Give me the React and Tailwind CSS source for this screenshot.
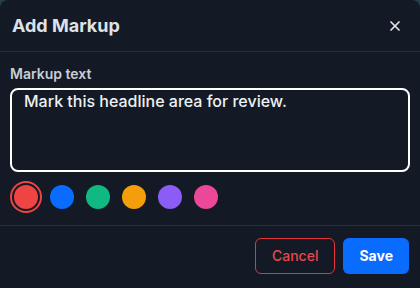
import React, { useState } from 'react';
import { X } from 'lucide-react';

const swatches = ['#ef4444', '#0a6cff', '#10b981', '#f59e0b', '#8b5cf6', '#ec4899'];

const App = () => {
  const [color, setColor] = useState(0);
  const [text, setText] = useState('Mark this headline area for review.');

  return (
    <div className="w-[420px] h-[288px] bg-[#22404a] overflow-hidden" style={{ fontFamily: 'Inter, "Noto Sans", sans-serif' }}>
      <div className="w-full h-[288px] bg-[#131a25] rounded-t-lg flex flex-col">
        {/* Header */}
        <div className="h-[52px] px-3 flex items-center justify-between border-b border-[#253040]">
          <h2 className="text-[18px] font-bold text-[#dde2e8]">Add Markup</h2>
          <button className="mr-[5px] text-[#e5e7eb]">
            <X size={16} strokeWidth={2.5} />
          </button>
        </div>

        {/* Body */}
        <div className="px-2.5 pt-3 pb-4 border-b border-[#253040]">
          <label className="block text-sm font-semibold text-[#c9ced6] leading-5 mb-1">Markup text</label>
          <textarea
            value={text}
            onChange={(e) => setText(e.target.value)}
            className="block w-full h-[84px] resize-none bg-transparent border-2 border-white rounded-lg px-3 pt-0 text-[16px] leading-[22px] font-medium text-[#eef0f3] outline-none"
          />
          <div className="flex gap-3 mt-[13px] pl-1">
            {swatches.map((c, i) => (
              <button
                key={c}
                onClick={() => setColor(i)}
                className={
                  i === color
                    ? 'w-6 h-6 rounded-full ring-2 ring-[#ef4444] ring-offset-2 ring-offset-[#131a25]'
                    : 'w-6 h-6 rounded-full'
                }
                style={{ backgroundColor: c }}
              />
            ))}
          </div>
        </div>

        {/* Footer */}
        <div className="flex justify-end gap-2 pl-3 pr-[11px] pt-3">
          <button className="h-9 px-4 rounded-md border border-[#e5343b] text-[#e5484d] text-sm font-medium">
            Cancel
          </button>
          <button className="h-9 px-4 rounded-md bg-[#0a6cff] text-white text-sm font-bold">
            Save
          </button>
        </div>
      </div>
    </div>
  );
};

export default App;
